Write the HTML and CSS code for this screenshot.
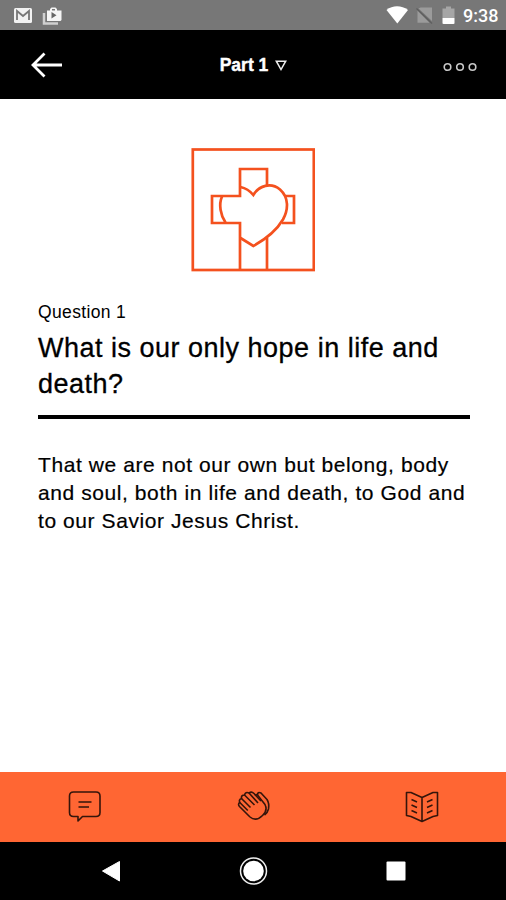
FILE: index.html
```html
<!DOCTYPE html>
<html lang="en">

<head>
    <meta charset="UTF-8">
    <meta name="viewport" content="width=device-width, initial-scale=1.0">
    <title>Question 1</title>
    <link rel="stylesheet" href="styles.css">
</head>

<body>
    <div class="status-bar">
        <svg class="notifications" width="64" height="30" viewBox="0 0 64 30">
            <rect x="14" y="8" width="18" height="15" rx="1.500" fill="#f2f2f2" />
            <path d="M17 20V11l6 5 6-5v9" fill="none" stroke="#777" stroke-width="1.800" />
            <path d="M44 13v10.500h14" fill="none" stroke="#d0d0d0" stroke-width="2.500" />
            <path d="M47 10.500h3V9l1.500-1.500h4l1.500 1.500v1.500h4.500V20l-1 1H47z" fill="#f5f5f5" />
            <path d="M52 9h3v1.500h-3z" fill="#777" />
            <path d="M51.500 12v6.500l5-3.200z" fill="#666" />
        </svg>
        <svg class="signals" width="70" height="30" viewBox="0 0 70 30">
            <path d="M0.500 10C6.500 5 15.500 5 22 10L11.300 23.500z" fill="#fff" />
            <path d="M34.500 7.500h11.500v13.500L32.500 8.500zM31.500 10.500L43.500 22.800H31.500z" fill="#9b9b9b" />
            <path d="M30.500 8.500L46 23.500" stroke="#5e5e5e" stroke-width="1.200" />
            <path d="M56.500 8.500h3.500V6.500h5v2h3.500V18h-12z" fill="#a6a6a6" />
            <path d="M56.500 18h12v5.500l-1 .5h-10l-1-.5z" fill="#fff" />
        </svg>
        <span class="time">9:38</span>
    </div>

    <div class="header">
        <svg width="32" height="26" viewBox="0 0 32 26">
            <path d="M13.500 1.500L2 13l11.500 11.500M2 13h29" fill="none" stroke="#fff" stroke-width="2.800" />
        </svg>
        <div class="part">
            <span>Part 1</span>
            <svg width="12" height="11" viewBox="0 0 12 11">
                <path d="M1.300 1.200h9.400L6 9.500z" fill="none" stroke="#eee" stroke-width="1.500" />
            </svg>
        </div>
        <svg width="36" height="10" viewBox="0 0 36 10">
            <g fill="none" stroke="#c8c8c8" stroke-width="1.600">
                <circle cx="5.500" cy="5" r="3.300" />
                <circle cx="18" cy="5" r="3.300" />
                <circle cx="30.500" cy="5" r="3.300" />
            </g>
        </svg>
    </div>

    <div class="content">
        <svg class="emblem" width="124" height="124" viewBox="0 0 124 124">
            <g fill="none" stroke="#f4511e" stroke-width="2.700">
                <rect x="1.800" y="1.500" width="121" height="120.500" />
                <!-- cross -->
                <path d="M49 121V75H21V48H49V21H76V37.500" />
                <path d="M93 48h10v27H91" />
                <path d="M76 89.500V121" />
                <!-- heart -->
                <path d="M49.500 39Q57 40.500 62.300 47C68 37.500 80 34 89 41.500C98 49.500 97.500 61.500 92 71.500C85 83.500 74 91.500 62.300 98L49.500 90" />
                <path d="M31 48.500C27.500 56.500 29.500 67 34.500 74.500" />
            </g>
        </svg>
        <div class="label">Question 1</div>
        <h1>What is our only hope in life and death?</h1>
        <p>That we are not our own but belong, body and soul, both in life and death, to God and to our Savior Jesus Christ.</p>
    </div>

    <div class="tabs">
        <svg width="34" height="34" viewBox="0 0 34 34">
            <path d="M5.500 3h22.500q4 0 4 4v16.500q0 4-4 4H14.500l-4.500 4.500v-4.500H5.500q-4 0-4-4V7q0-4 4-4zM10.500 13h13M10.500 18h10.500" />
        </svg>
        <svg width="34" height="34" viewBox="0 0 34 34">
            <path d="M13 28L2.500 17.500Q0.500 15 2.800 13.500Q1.500 10.500 4.500 9.500Q4 6 7.500 6Q8.500 2.500 12 4Q14.500 2 17 4.500L24 12" />
            <path d="M2.800 13.500l8 8M4.500 9.500l9 9M7.500 6l10 10M12 4l9 10" />
            <path d="M13 28q6 5 12.500-1.500q5.500-5 2.500-11L20.500 6q-2-1-2 1" />
            <path d="M20.500 6q0-3.500 3.500-2L30 10.500q2.500 4 1.500 9.500q-1 4-4 6" />
        </svg>
        <svg width="34" height="34" viewBox="0 0 34 34">
            <path d="M17 8.500L6 3.500H1.500v23l4.500 1 11 5 11-5 4.500-1V3.500h-4.500L17 8.500v24M6.500 10.500l5.500 2.500M6.500 16l5.500 2.500M6.500 21.500l5.500 2.500M27.500 10.500l-5.500 2.500M27.500 16l-5.500 2.500M27.500 21.500l-5.500 2.500" />
        </svg>
    </div>

    <div class="nav-bar">
        <svg width="30" height="30" viewBox="0 0 30 30">
            <path d="M6.500 15L23.500 5.500v19.500z" fill="#fff" stroke="#fff" stroke-linejoin="round" />
        </svg>
        <svg width="30" height="30" viewBox="0 0 30 30">
            <circle cx="14.500" cy="15" r="13" fill="none" stroke="#eee" stroke-width="1.500" />
            <circle cx="14.500" cy="15" r="10.300" fill="#fff" />
        </svg>
        <svg width="30" height="30" viewBox="0 0 30 30">
            <rect x="5.500" y="5.500" width="19" height="19" rx="1" fill="#fff" />
        </svg>
    </div>
</body>

</html>
```

FILE: styles.css
```css
body {
    margin: 0;
    height: 900px;
    display: flex;
    flex-direction: column;
    background-color: white;
    color: black;
    font-family: "Liberation Sans", Arial, sans-serif;
}

svg {
    display: block;
}

.status-bar {
    height: 30px;
    display: flex;
    align-items: center;
    background-color: #777;
}

.signals {
    margin-left: auto;
}

.time {
    width: 36px;
    margin: 1px 7px 0 7px;
    color: white;
    font-family: Roboto, sans-serif;
    font-size: 18px;
    font-weight: 500;
}

.header {
    height: 69px;
    box-sizing: border-box;
    padding: 0 28px 0 31px;
    display: grid;
    grid-template-columns: 1fr auto 1fr;
    align-items: center;
    background-color: black;
}

.header > svg:last-child {
    justify-self: end;
    margin-top: 4px;
}

.part {
    display: flex;
    align-items: center;
    gap: 7px;
    margin: 2px 2px 0 0;
    color: white;
    font-size: 17.5px;
    font-weight: bold;
    -webkit-text-stroke: 0.4px white;
}

.content {
    flex: 1;
    padding: 49px 36px 0 38px;
}

.emblem {
    margin: 0 auto 0 153px;
}

.label {
    margin-top: 30px;
    font-size: 17.5px;
    line-height: 20px;
    letter-spacing: 0.35px;
}

h1 {
    margin: 8px 0 0;
    padding-bottom: 13px;
    border-bottom: 4px solid black;
    font-size: 27px;
    font-weight: normal;
    line-height: 36px;
    letter-spacing: 0.5px;
    -webkit-text-stroke: 0.3px black;
}

p {
    margin: 32px 0 0;
    font-size: 21px;
    line-height: 28px;
    letter-spacing: 0.58px;
    -webkit-text-stroke: 0.2px black;
}

.tabs {
    height: 70px;
    display: flex;
    align-items: center;
    justify-content: space-between;
    padding: 0 67px 0 68px;
    background-color: #ff6633;
}

.tabs svg {
    margin-top: -2px;
}

.tabs path {
    fill: none;
    stroke: #35150b;
    stroke-width: 1.6;
    stroke-linejoin: round;
}

.nav-bar {
    height: 58px;
    display: flex;
    align-items: center;
    justify-content: space-between;
    padding: 0 95px 0 96px;
    background-color: black;
}
```
